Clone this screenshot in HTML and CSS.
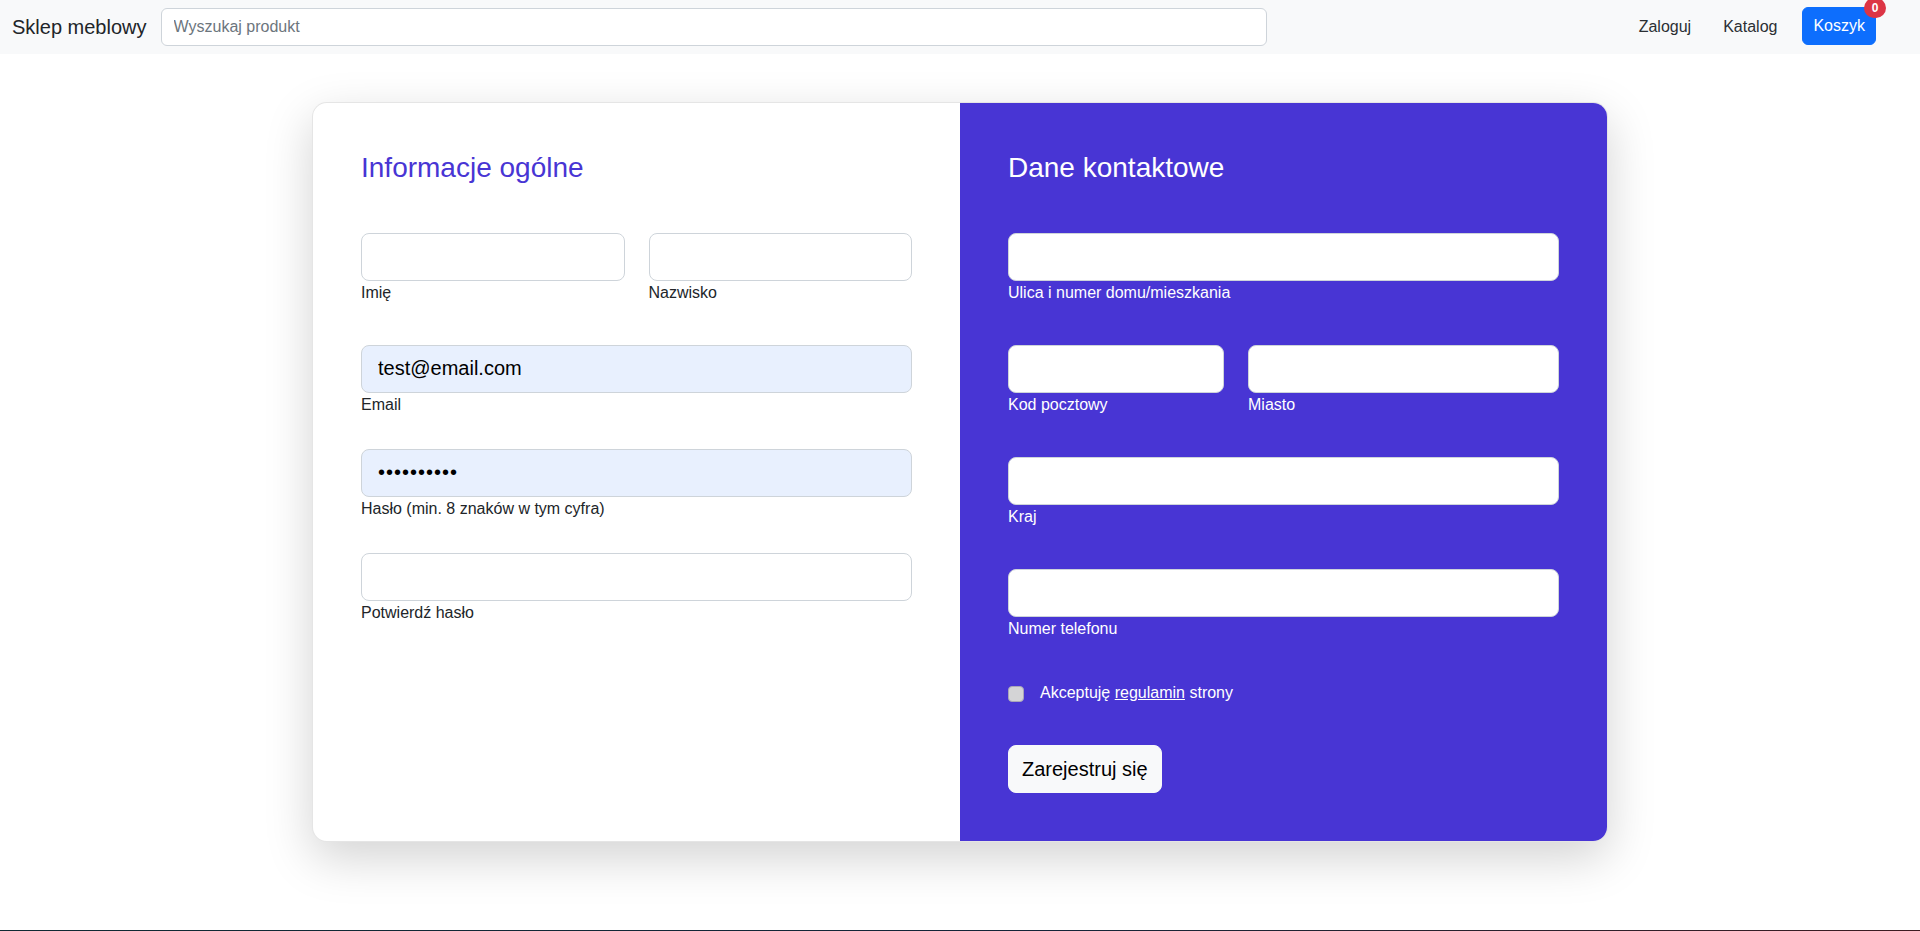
FILE: index.html
```html
<!DOCTYPE html>
<html lang="pl">
<head>
<meta charset="utf-8">
<title>Sklep meblowy – Rejestracja</title>
<link rel="stylesheet" href="styles.css">
</head>
<body>
<nav class="navbar">
  <a class="brand" href="#">Sklep meblowy</a>
  <input class="search" type="search" placeholder="Wyszukaj produkt">
  <ul class="nav">
    <li><a class="nav-link" href="#">Zaloguj</a></li>
    <li><a class="nav-link" href="#">Katalog</a></li>
    <li class="cart-item"><a class="btn-cart" href="#">Koszyk<span class="badge">0</span></a></li>
  </ul>
</nav>
<main class="page">
  <div class="card">
    <section class="panel panel-left">
      <h3 class="panel-title">Informacje ogólne</h3>
      <div class="row-half">
        <div class="field field-wide"><input class="control" type="text"><label class="label">Imię</label></div>
        <div class="field field-wide"><input class="control" type="text"><label class="label">Nazwisko</label></div>
      </div>
      <div class="field"><input class="control control-filled" type="email" value="test@email.com"><label class="label">Email</label></div>
      <div class="field"><input class="control control-filled control-secret" type="password" value="haslo12345"><label class="label">Hasło (min. 8 znaków w tym cyfra)</label></div>
      <div class="field"><input class="control control-secret" type="password"><label class="label">Potwierdź hasło</label></div>
    </section>
    <section class="panel panel-right">
      <h3 class="panel-title">Dane kontaktowe</h3>
      <div class="field field-wide"><input class="control" type="text"><label class="label">Ulica i numer domu/mieszkania</label></div>
      <div class="row-split">
        <div class="field field-wide"><input class="control" type="text"><label class="label">Kod pocztowy</label></div>
        <div class="field field-wide"><input class="control" type="text"><label class="label">Miasto</label></div>
      </div>
      <div class="field field-wide"><input class="control" type="text"><label class="label">Kraj</label></div>
      <div class="field field-wide"><input class="control" type="tel"><label class="label">Numer telefonu</label></div>
      <div class="check-row">
        <input class="check" type="checkbox" id="terms">
        <label class="check-label" for="terms">Akceptuję <a class="terms-link" href="#">regulamin</a> strony</label>
      </div>
      <button class="btn-submit" type="button">Zarejestruj się</button>
    </section>
  </div>
</main>
<footer class="footer"></footer>
</body>
</html>
```

FILE: styles.css
```css
* { box-sizing: border-box; }

html, body {
  margin: 0;
  padding: 0;
}

body {
  font-family: "Liberation Sans", Arial, sans-serif;
  font-size: 16px;
  line-height: 1.5;
  color: #212529;
  background: #fff;
}

/* NAVBAR */
.navbar {
  display: flex;
  align-items: center;
  height: 54px;
  padding: 0 12px;
  background: #f8f9fa;
}

.brand {
  font-size: 20px;
  line-height: 30px;
  color: #212529;
  text-decoration: none;
  margin-right: 14px;
}

.search {
  width: 1106px;
  height: 38px;
  padding: 6px 12px;
  font-family: inherit;
  font-size: 16px;
  line-height: 24px;
  color: #212529;
  background: #fff;
  border: 1px solid #ced4da;
  border-radius: 6px;
  outline: none;
  margin-top: -1px;
}

.search::placeholder { color: #6c757d; }

.nav {
  display: flex;
  align-items: center;
  list-style: none;
  margin: 0 32px 0 auto;
  padding: 0;
}

.nav-link {
  display: block;
  padding: 8px 16px;
  color: #2b2f33;
  text-decoration: none;
  font-size: 16px;
  line-height: 24px;
}

.cart-item { margin-left: 9px; }

.btn-cart {
  position: relative;
  display: block;
  padding: 6px 10px;
  font-size: 16px;
  line-height: 24px;
  color: #fff;
  background: #0d6efd;
  border: 1px solid #0d6efd;
  border-radius: 6px;
  text-decoration: none;
  margin-top: -3px;
}

.badge {
  position: absolute;
  top: 0;
  left: 100%;
  transform: translate(-50%, -50%);
  min-width: 22px;
  padding: 4px 7px;
  font-size: 12px;
  font-weight: 700;
  line-height: 1;
  color: #fff;
  text-align: center;
  background: #dc3545;
  border-radius: 50px;
}

/* PAGE */
.page {
  padding: 48px 0 88px;
}

.card {
  width: 1296px;
  margin: 0 auto;
  display: grid;
  grid-template-columns: 1fr 1fr;
  border-radius: 15px;
  overflow: hidden;
  background: #fff;
  border: 1px solid rgba(0, 0, 0, 0.1);
  box-shadow: 0 16px 48px rgba(0, 0, 0, 0.175);
}

.panel {
  padding: 48px;
}

.panel-right {
  background: #4835d4;
  color: #fff;
}

.panel-title {
  margin: 0 0 48px;
  font-size: 28px;
  font-weight: 400;
  line-height: 1.2;
  color: #4835d4;
}

.panel-right .panel-title { color: #fff; }

.row-half {
  display: grid;
  grid-template-columns: 1fr 1fr;
  column-gap: 24px;
}

.row-split {
  display: grid;
  grid-template-columns: 216px 1fr;
  column-gap: 24px;
}

.field {
  display: flow-root;
  margin-bottom: 24px;
}

.field-wide {
  padding-bottom: 8px;
}

.control {
  display: block;
  width: 100%;
  height: 48px;
  padding: 8px 16px;
  font-family: inherit;
  font-size: 20px;
  line-height: 30px;
  color: #000;
  background: #fff;
  border: 1px solid #ced4da;
  border-radius: 8px;
  outline: none;
}

.control-filled {
  background: #e8f0fe;
}

.control-secret {
  letter-spacing: 1px;
}

.label {
  display: block;
  margin-bottom: 8px;
  font-size: 16px;
  line-height: 24px;
}

.check-row {
  display: flex;
  align-items: flex-start;
  margin-bottom: 40px;
}

.check {
  appearance: none;
  -webkit-appearance: none;
  width: 16px;
  height: 16px;
  margin: 5px 16px 0 0;
  background: #d4d4d6;
  border: 1px solid #a9a6b8;
  border-radius: 4px;
  flex-shrink: 0;
}

.check-label {
  font-size: 16px;
  line-height: 24px;
}

.terms-link {
  color: #fff;
  text-decoration: underline;
}

.btn-submit {
  display: block;
  height: 48px;
  padding: 8px 13px;
  font-family: inherit;
  font-size: 20px;
  line-height: 30px;
  color: #000;
  background: #f8f9fa;
  border: 1px solid #f8f9fa;
  border-radius: 8px;
}

/* FOOTER */
.footer {
  height: 200px;
  background: linear-gradient(90deg, #0f2a33 0%, #142538 55%, #3d1c22 100%);
}
```
